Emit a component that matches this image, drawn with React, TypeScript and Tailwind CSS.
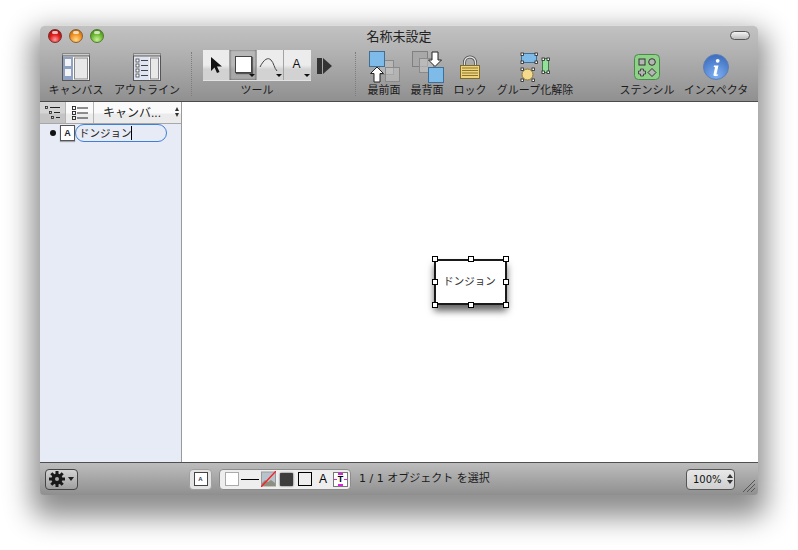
import React from "react";

const F = '"Liberation Sans","Noto Sans CJK JP",sans-serif';
const L = '"DejaVu Sans","Noto Sans CJK JP",sans-serif';

function ToolItem({ w, ml, label, children }: { w: number; ml?: number; label: string; children: React.ReactNode }) {
  return (
    <div className="flex flex-col items-center shrink-0" style={{ width: w, marginLeft: ml ?? 0 }}>
      <div className="h-[33px] flex items-center justify-center">{children}</div>
      <div className="text-[11px] leading-[14px] text-[#1c1c1c] whitespace-nowrap">{label}</div>
    </div>
  );
}

const Sep = ({ ml }: { ml: number }) => (
  <div className="w-0 h-[44px] mt-[2px] border-l border-dotted border-[#7d7d7d] shrink-0" style={{ marginLeft: ml }} />
);

function CanvasIcon() {
  return (
    <svg width="28" height="28" viewBox="0 0 28 28">
      <rect x="0.5" y="0.5" width="27" height="3" fill="#ccc" stroke="#888" />
      <rect x="0.5" y="3" width="27" height="24.5" fill="#fff" stroke="#555" />
      <rect x="1" y="4" width="10" height="23" fill="#8fa2c4" />
      <rect x="3" y="6" width="6" height="7" fill="#f5f5f5" />
      <rect x="3" y="16" width="6" height="7" fill="#f5f5f5" />
      <rect x="12.5" y="5" width="13" height="21" fill="#e8e8e8" stroke="#888" />
    </svg>
  );
}
function OutlineIcon() {
  return (
    <svg width="28" height="28" viewBox="0 0 28 28">
      <rect x="0.5" y="0.5" width="27" height="3" fill="#ccc" stroke="#888" />
      <rect x="0.5" y="3" width="27" height="24.5" fill="#f4f5fa" stroke="#555" />
      <rect x="1" y="4" width="15" height="23" fill="#dfe4f2" />
      {[6, 11, 16, 21].map((y) => (
        <g key={y}>
          <rect x="3" y={y} width="3" height="3" fill="#fff" stroke="#444" strokeWidth="0.8" />
          <line x1="8" x2="15" y1={y + 1.5} y2={y + 1.5} stroke="#444" />
        </g>
      ))}
      <rect x="17.5" y="5" width="8" height="21" fill="#e8e8e8" stroke="#888" />
    </svg>
  );
}
function FrontIcon() {
  return (
    <svg width="33" height="34" viewBox="0 0 33 34">
      <rect x="11.500" y="10.500" width="14" height="14" fill="#c8c8c8" fillOpacity=".45" stroke="#8a8a8a" />
      <rect x="17.500" y="17.500" width="14" height="14" fill="#c8c8c8" fillOpacity=".45" stroke="#8a8a8a" />
      <rect x="1.500" y="1.500" width="15" height="15" fill="#7ebbe9" stroke="#3e6f98" />
      <path d="M9 17l6.500 6.500h-3.500V32H6v-8.500H2.500z" fill="#fff" stroke="#222" strokeWidth="1" />
    </svg>
  );
}
function BackIcon() {
  return (
    <svg width="33" height="34" viewBox="0 0 33 34">
      <rect x="1.500" y="1.500" width="15" height="15" fill="#a8a8a8" stroke="#808080" />
      <rect x="8.500" y="8.500" width="14" height="14" fill="#c8c8c8" fillOpacity=".55" stroke="#8a8a8a" />
      <rect x="17.500" y="17.500" width="15" height="15" fill="#7ebbe9" stroke="#3e6f98" />
      <path d="M24 16.500l-6.500-6.500H21V2h6v8h3.500z" fill="#fff" stroke="#222" strokeWidth="1" />
    </svg>
  );
}
function LockIcon() {
  return (
    <svg width="20" height="24" viewBox="0 0 20 24">
      <path d="M4.500 11V7.500a5.500 5.500 0 0111 0V11" fill="none" stroke="#4a4a4a" strokeWidth="3" />
      <path d="M4.500 11V7.500a5.500 5.500 0 0111 0V11" fill="none" stroke="#e2e2e2" strokeWidth="1.400" />
      <rect x="0.500" y="10.500" width="19" height="13" fill="#f0d47a" stroke="#7c6a2e" />
      {[13, 15.500, 18, 20.500].map((y) => (
        <line key={y} x1="2" x2="18" y1={y} y2={y} stroke="#8c7431" />
      ))}
    </svg>
  );
}
const Handle = ({ x, y }: { x: number; y: number }) => (
  <rect x={x - 1} y={y - 1} width="2.500" height="2.500" fill="#fff" stroke="#222" strokeWidth=".8" />
);
function UngroupIcon() {
  return (
    <svg width="30" height="30" viewBox="0 0 30 30">
      <rect x="1.500" y="1.500" width="15" height="9" rx="1" fill="#7ebbe9" stroke="#3e6f98" />
      <Handle x={2} y={2} /><Handle x={16} y={2} /><Handle x={2} y={10} /><Handle x={16} y={10} />
      <rect x="22.500" y="6.500" width="6" height="14" fill="#93e09a" stroke="#3b7c44" />
      <Handle x={23} y={7} /><Handle x={28} y={7} /><Handle x={23} y={20} /><Handle x={28} y={20} />
      <ellipse cx="7.500" cy="22.500" rx="5.500" ry="5.500" fill="#f3da8c" stroke="#8a7638" />
      <Handle x={2} y={17} /><Handle x={13} y={17} /><Handle x={2} y={28} /><Handle x={13} y={28} />
    </svg>
  );
}
function StencilIcon() {
  return (
    <svg width="26" height="26" viewBox="0 0 26 26">
      <rect x="0.500" y="0.500" width="25" height="25" rx="4" fill="#8fd188" stroke="#4a8a4a" />
      <rect x="5" y="5" width="6" height="6" fill="#b5b5b5" stroke="#333" />
      <circle cx="18" cy="8" r="3.300" fill="#b5b5b5" stroke="#333" />
      <path d="M6.500 15h3v2h2v3h-2v2h-3v-2h-2v-3h2z" fill="#b5b5b5" stroke="#333" strokeWidth=".8" />
      <path d="M18 14.500l4 4-4 4-4-4z" fill="#b5b5b5" stroke="#333" />
    </svg>
  );
}
function InfoIcon() {
  return (
    <svg width="26" height="26" viewBox="0 0 26 26">
      <defs>
        <radialGradient id="inf" cx="50%" cy="85%" r="80%">
          <stop offset="0" stopColor="#7fb0f2" />
          <stop offset="1" stopColor="#3f6fc0" />
        </radialGradient>
      </defs>
      <circle cx="13" cy="13" r="12.500" fill="url(#inf)" stroke="#5d7fb5" />
      <circle cx="14.700" cy="6.800" r="1.900" fill="#fff" />
      <path d="M11 11.500h4.500l-2 8.500c0 .8.600.8 1.600.3l-.2 1.100c-2 1-4.800 1-4.400-1l1.500-7.200-1.300-.2z" fill="#fff" />
    </svg>
  );
}

function ToolCell({ children, active }: { children: React.ReactNode; active?: boolean }) {
  return (
    <div
      className={
        "relative w-[27px] h-[30px] flex items-center justify-center border-r border-[#a3a3a3] last:border-r-0 " +
        (active
          ? "bg-[linear-gradient(#b8b8b8_0,#b8b8b8_50%,#a8a8a8_65%,#a8a8a8_100%)] shadow-[inset_0_0_2px_rgba(0,0,0,0.6)]"
          : "bg-[linear-gradient(#ececec_0,#ececec_50%,#d2d2d2_65%,#d2d2d2_100%)]")
      }
    >
      {children}
    </div>
  );
}
const MiniArrow = () => (
  <div className="absolute right-[1px] bottom-[3px] w-0 h-0 border-l-[3px] border-r-[3px] border-t-[3px] border-l-transparent border-r-transparent border-t-[#111]" />
);

function Toolbar() {
  return (
    <div className="h-[77px] border-b border-[#4b4b4b] bg-[linear-gradient(#c2c2c2_0,#b2b2b2_35%,#909090_100%)] flex flex-col rounded-t-[5px] border-t border-t-[#dcdcdc]">
      <div className="h-[21px] relative flex items-center justify-center shrink-0">
        <div className="text-[13px] leading-none text-[#222] -mt-[1px]">名称未設定</div>
        <div className="absolute left-[8px] top-[3px] flex gap-[7px]">
          {[
            "bg-[radial-gradient(circle_at_50%_80%,#ff9a9a_0,#e02020_45%,#8a0808_100%)] border-[#7a2a2a]",
            "bg-[radial-gradient(circle_at_50%_80%,#ffd98a_0,#f09020_50%,#a65a08_100%)] border-[#8a6030]",
            "bg-[radial-gradient(circle_at_50%_80%,#c8f09a_0,#6cb830_50%,#3a7a10_100%)] border-[#4f7a30]",
          ].map((c) => (
            <div key={c} className={"relative w-[14px] h-[14px] rounded-full border " + c}>
              <div className="absolute left-[3px] top-[1px] w-[6px] h-[3px] rounded-full bg-white/70" />
            </div>
          ))}
        </div>
        <div className="absolute right-[8px] top-[5px] w-[20px] h-[9px] rounded-full border border-[#555] bg-[linear-gradient(#f4f4f4,#bbb)]" />
      </div>
      <div className="flex items-start pl-[6px] pt-[3px]">
        <ToolItem w={60} label="キャンバス"><CanvasIcon /></ToolItem>
        <ToolItem w={72} ml={5} label="アウトライン"><OutlineIcon /></ToolItem>
        <Sep ml={8} />
        <div className="flex flex-col items-center ml-[11px] shrink-0">
          <div className="flex border-b border-[#e4e4e4]">
            <ToolCell>
              <svg width="14" height="18" viewBox="0 0 14 18"><path d="M2 1v14l3.500-3.500 2.500 5.500 2.500-1-2.500-5.500H13z" fill="#111" /></svg>
            </ToolCell>
            <ToolCell active>
              <div className="w-[17px] h-[17px] bg-white border border-[#444] shadow-[1px_1px_1px_rgba(0,0,0,0.5)] -mt-[2px]" />
              <MiniArrow />
            </ToolCell>
            <ToolCell>
              <svg width="22" height="20" viewBox="0 0 22 20"><path d="M1 12C5 4 9 2 12 5s3 8 6 11" fill="none" stroke="#444" /></svg>
              <MiniArrow />
            </ToolCell>
            <ToolCell>
              <span className="text-[12px] leading-none text-[#111] -mt-[2px] mr-[2px]">A</span>
              <MiniArrow />
            </ToolCell>
          </div>
          <div className="text-[11px] leading-[14px] mt-[2px] text-[#1c1c1c]">ツール</div>
        </div>
        <svg className="ml-[6px] mt-[7px] shrink-0" width="15" height="18" viewBox="0 0 15 18">
          <rect x="0" y="1" width="5" height="16" fill="#333" />
          <path d="M6 1l9 8-9 8z" fill="#333" />
        </svg>
        <Sep ml={23} />
        <ToolItem w={40} ml={8} label="最前面"><FrontIcon /></ToolItem>
        <ToolItem w={40} ml={3} label="最背面"><BackIcon /></ToolItem>
        <ToolItem w={36} ml={5} label="ロック"><LockIcon /></ToolItem>
        <ToolItem w={76} ml={9} label="グループ化解除"><UngroupIcon /></ToolItem>
        <ToolItem w={60} ml={44} label="ステンシル"><StencilIcon /></ToolItem>
        <ToolItem w={66} ml={6} label="インスペクタ"><InfoIcon /></ToolItem>
      </div>
    </div>
  );
}

function Sidebar() {
  return (
    <div className="w-[142px] shrink-0 bg-[#e7ebf6] border-r border-[#9a9a9a] flex flex-col">
      <div className="h-[22px] flex border-b border-[#a8a8a8] bg-[linear-gradient(#fafafa_0,#fafafa_50%,#ebebeb_60%,#ebebeb_100%)]">
        <div className="w-[26px] flex items-center justify-center border-r border-[#b5b5b5] bg-[linear-gradient(#d5d5d5_0,#d5d5d5_50%,#c4c4c4_60%,#c4c4c4_100%)]">
          <svg width="16" height="13" viewBox="0 0 16 13">
            <rect x="0.500" y="0.500" width="2" height="2" fill="none" stroke="#222" strokeWidth=".8" /><line x1="5" x2="15" y1="1.500" y2="1.500" stroke="#222" />
            <rect x="4.500" y="5.500" width="2" height="2" fill="none" stroke="#222" strokeWidth=".8" /><line x1="9" x2="15" y1="6.500" y2="6.500" stroke="#222" />
            <rect x="6.500" y="10.500" width="2" height="2" fill="none" stroke="#222" strokeWidth=".8" /><line x1="11" x2="15" y1="11.500" y2="11.500" stroke="#222" />
          </svg>
        </div>
        <div className="w-[28px] flex items-center justify-center border-r border-[#b5b5b5]">
          <svg width="16" height="14" viewBox="0 0 16 14">
            {[1, 6, 11].map((y) => (
              <g key={y}>
                <rect x="0.500" y={y - 0.5} width="3" height="3" fill="none" stroke="#222" strokeWidth=".9" />
                <line x1="5" x2="16" y1={y + 1} y2={y + 1} stroke="#222" />
              </g>
            ))}
          </svg>
        </div>
        <div className="flex-1 relative flex items-center pl-[9px] text-[12px] text-[#222] whitespace-nowrap">
          キャンバ...
          <div className="absolute right-[2px] top-[5px] flex flex-col gap-[2px]">
            <div className="w-0 h-0 border-l-[2.5px] border-r-[2.5px] border-b-[4px] border-l-transparent border-r-transparent border-b-[#333]" />
            <div className="w-0 h-0 border-l-[2.5px] border-r-[2.5px] border-t-[4px] border-l-transparent border-r-transparent border-t-[#333]" />
          </div>
        </div>
      </div>
      <div className="flex items-center pl-[10px]">
        <div className="w-[6px] h-[6px] rounded-full bg-[#111] mr-[4px]" />
        <div className="w-[15px] h-[16px] bg-white border border-[#555] shadow-[0_1px_1px_rgba(0,0,0,0.3)] flex items-center justify-center text-[9px] font-bold text-[#223] leading-none">A</div>
        <div className="w-[92px] h-[18px] rounded-[9px] border border-[#3f7fd8] flex items-center pl-[3px] text-[10.5px] text-[#222] leading-none">
          <span>ドンジョン</span>
          <span className="w-px h-[14px] bg-black ml-[-1px]" />
        </div>
      </div>
    </div>
  );
}

function DiagramNode() {
  const hs = [
    "left-[-4px] top-[-5px]", "left-[32px] top-[-5px]", "left-[67px] top-[-5px]",
    "left-[-4px] top-[18px]", "left-[67px] top-[18px]",
    "left-[-4px] top-[41px]", "left-[32px] top-[41px]", "left-[67px] top-[41px]",
  ];
  return (
    <div className="absolute left-[252px] top-[157px] w-[73px] h-[46px] bg-white border-2 border-[#1a1a1a] shadow-[0_6px_7px_rgba(0,0,0,0.6)] flex items-center justify-center text-[10.5px] text-[#333] pr-[2px]">
      ドンジョン
      {hs.map((h) => (
        <div key={h} className={"absolute w-[6px] h-[6px] bg-white border border-black " + h} />
      ))}
    </div>
  );
}

function Swatches() {
  return (
    <div className="ml-[7px] w-[132px] h-[21px] rounded-[4px] bg-[#eeeeee] border border-[#8c8c8c] flex items-center pl-[5px]">
      <div className="w-[14px] h-[14px] bg-white border border-[#aaa]" />
      <div className="w-[18px] h-px bg-black ml-[2px]" />
      <svg className="ml-[2px]" width="15" height="16" viewBox="0 0 15 16">
        <rect x="0.500" y="1" width="14" height="14" fill="#b7c3cc" stroke="#999" />
        <path d="M1 12l3-3 3 2 3-2 4 3v3H1z" fill="#8f8f80" />
        <line x1="0" y1="16" x2="15" y2="0" stroke="#ff1a22" strokeWidth="1.300" />
      </svg>
      <div className="ml-[4px] w-[13px] h-[13px] bg-[#3d3d3d] rounded-[1px] shadow-[0_0_2px_rgba(0,0,0,0.8)]" />
      <div className="ml-[5px] w-[14px] h-[14px] border border-black bg-[#eee]" />
      <span className="ml-[7px] text-[12px] leading-none text-black w-[10px]">A</span>
      <div className="ml-[4px] w-[15px] h-[15px] bg-white border border-[#777] relative flex items-center justify-center text-[9px] font-bold text-black leading-none">
        T
        <div className="absolute left-[4px] top-0 w-[5px] h-[2px] border-t-2 border-[#e020e0]" />
        <div className="absolute left-[4px] bottom-0 w-[5px] h-[2px] border-b-2 border-[#e020e0]" />
        <div className="absolute left-0 top-[6px] w-[3px] h-px bg-[#e020e0]" />
        <div className="absolute right-0 top-[6px] w-[3px] h-px bg-[#e020e0]" />
      </div>
    </div>
  );
}

function BottomBar() {
  return (
    <div className="h-[33px] shrink-0 border-t border-[#4f4f4f] bg-[linear-gradient(#bdbdbd,#8f8f8f)] rounded-b-[4px] flex items-center relative">
      <div className="ml-[5px] w-[33px] h-[21px] rounded-[4px] border border-[#444] bg-[linear-gradient(#d4d4d4,#9e9e9e)] flex items-center justify-center gap-[3px]">
        <svg width="16" height="16" viewBox="0 0 16 16">
          <g stroke="#1a1a1a" strokeWidth="3">
            <line x1="8" y1="0" x2="8" y2="16" /><line x1="0" y1="8" x2="16" y2="8" />
            <line x1="2.300" y1="2.300" x2="13.700" y2="13.700" /><line x1="13.700" y1="2.300" x2="2.300" y2="13.700" />
          </g>
          <circle cx="8" cy="8" r="5.500" fill="#1a1a1a" />
          <circle cx="8" cy="8" r="2" fill="#a9a9a9" />
        </svg>
        <div className="w-0 h-0 border-l-[3px] border-r-[3px] border-t-[4px] border-l-transparent border-r-transparent border-t-[#222]" />
      </div>
      <div className="ml-[111px] w-[23px] h-[21px] rounded-[4px] bg-[#e4e4e4] border border-[#a0a0a0] flex items-center justify-center">
        <div className="w-[14px] h-[14px] border border-[#444] bg-white flex items-center justify-center text-[6px] font-bold text-[#335] leading-none">A</div>
      </div>
      <Swatches />
      <div className="ml-[8px] text-[11px] text-[#1c1c1c] whitespace-nowrap" style={{ fontFamily: L }}>1 / 1 オブジェクト を選択</div>
      <div className="ml-auto mr-[23px] w-[49px] h-[21px] rounded-[4px] border border-[#555] bg-[linear-gradient(#e8e8e8,#cfcfcf)] flex items-center pl-[6px] text-[10px] text-[#111]" style={{ fontFamily: L }}>
        100%
        <div className="ml-[5px] flex flex-col gap-[2px]">
          <div className="w-0 h-0 border-l-[3px] border-r-[3px] border-b-[4px] border-l-transparent border-r-transparent border-b-[#333]" />
          <div className="w-0 h-0 border-l-[3px] border-r-[3px] border-t-[4px] border-l-transparent border-r-transparent border-t-[#333]" />
        </div>
      </div>
      <svg className="absolute right-[3px] bottom-[3px]" width="12" height="12" viewBox="0 0 12 12">
        <g stroke="#555"><line x1="0" y1="12" x2="12" y2="0" /><line x1="4" y1="12" x2="12" y2="4" /><line x1="8" y1="12" x2="12" y2="8" /></g>
      </svg>
    </div>
  );
}

export default function App() {
  return (
    <div className="w-[798px] h-[550px] bg-white pt-[25px] pl-[40px] overflow-hidden" style={{ fontFamily: F }}>
      <div className="w-[718px] h-[470px] flex flex-col rounded-[5px] shadow-[0_14px_28px_8px_rgba(0,0,0,0.45)] bg-white">
        <Toolbar />
        <div className="flex-1 flex min-h-0">
          <Sidebar />
          <div className="flex-1 relative bg-white">
            <DiagramNode />
          </div>
        </div>
        <BottomBar />
      </div>
    </div>
  );
}
